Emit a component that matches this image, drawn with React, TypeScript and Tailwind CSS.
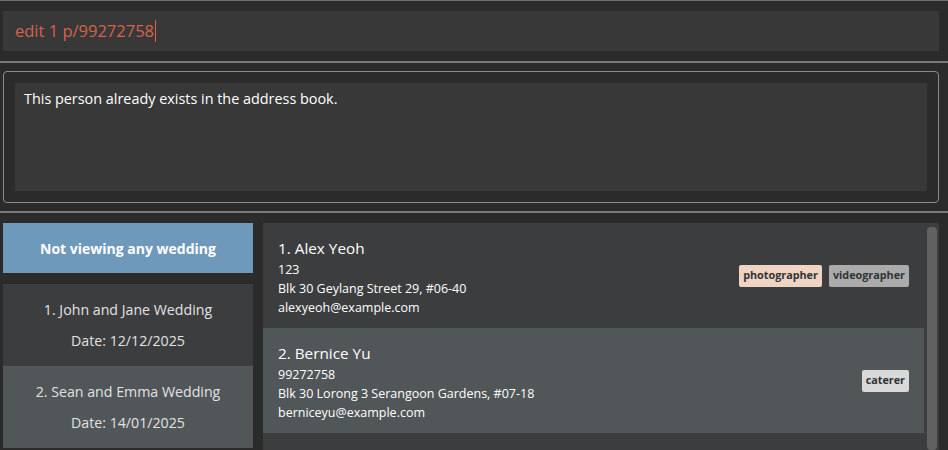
const persons = [
  {
    name: "1. Alex Yeoh",
    phone: "123",
    address: "Blk 30 Geylang Street 29, #06-40",
    email: "alexyeoh@example.com",
    tags: [
      { label: "photographer", color: "bg-[#efd3c3]" },
      { label: "videographer", color: "bg-[#ababab]" },
    ],
  },
  {
    name: "2. Bernice Yu",
    phone: "99272758",
    address: "Blk 30 Lorong 3 Serangoon Gardens, #07-18",
    email: "berniceyu@example.com",
    tags: [{ label: "caterer", color: "bg-[#d9d9d9]" }],
  },
];

const weddings = [
  { title: "1. John and Jane Wedding", date: "Date: 12/12/2025" },
  { title: "2. Sean and Emma Wedding", date: "Date: 14/01/2025" },
];

function Separator() {
  return <div className="h-[2px] w-full bg-[#7a7a7a]" />;
}

export default function App() {
  return (
    <div
      className="w-[948px] h-[450px] overflow-hidden bg-[#2b2b2b] border-t border-[#6f6f6f] flex flex-col"
      style={{ fontFamily: '"Open Sans", "Noto Sans", sans-serif' }}
    >
      {/* Command box */}
      <div className="pt-[10px] pb-[10px] pl-[3px] pr-[9px]">
        <div className="h-[40px] bg-[#383838] flex items-center pl-[12px]">
          <span className="text-[16.5px] text-[#d6624d] leading-none">edit 1 p/99272758</span>
          <span className="w-[1px] h-[22px] bg-[#d6624d] ml-[1px]" />
        </div>
      </div>

      <Separator />

      {/* Result display */}
      <div className="pt-[8px] pb-[8px] pl-[3px] pr-[9px]">
        <div className="h-[132px] border border-[#8c8c8c] rounded-[4px] p-[11px]">
          <div className="h-full bg-[#383838] px-[9px] pt-[6px]">
            <p className="text-[14.4px] text-white leading-[20px]">
              This person already exists in the address book.
            </p>
          </div>
        </div>
      </div>

      <Separator />

      {/* Lists */}
      <div className="flex flex-1 pt-[10px] pl-[3px] pr-[9px] gap-[10px] min-h-0">
        <div className="w-[250px] flex flex-col gap-[11px]">
          <div className="h-[50px] bg-[#6f99bb] flex items-center justify-center">
            <span className="text-[14px] font-bold text-white">Not viewing any wedding</span>
          </div>
          <div className="flex flex-col">
            {weddings.map((w, i) => (
              <div
                key={w.title}
                className={`h-[82px] flex flex-col items-center justify-center gap-[11px] text-[14.2px] leading-[20px] text-[#e2e2e2] ${
                  i % 2 === 0 ? "bg-[#3c3d3f]" : "bg-[#515658]"
                }`}
              >
                <span>{w.title}</span>
                <span>{w.date}</span>
              </div>
            ))}
          </div>
        </div>

        <div className="flex-1 bg-[#3c3d3f] flex">
          <div className="flex-1 flex flex-col">
            {persons.map((p, i) => (
              <div
                key={p.name}
                className={`h-[105px] flex items-center justify-between pl-[15px] pr-[15px] ${
                  i % 2 === 0 ? "bg-[#3c3d3f]" : "bg-[#515658]"
                }`}
              >
                <div className="self-start pt-[13px] flex flex-col text-white">
                  <span className="text-[15.3px] leading-[24px]">{p.name}</span>
                  <span className="text-[12.5px] leading-[19px]">{p.phone}</span>
                  <span className="text-[12.5px] leading-[19px]">{p.address}</span>
                  <span className="text-[12.5px] leading-[19px]">{p.email}</span>
                </div>
                <div className="flex gap-[7px]">
                  {p.tags.map((t) => (
                    <span
                      key={t.label}
                      className={`${t.color} h-[22px] px-[4px] rounded-[2px] flex items-center text-[10.8px] font-bold text-[#2f3337]`}
                    >
                      {t.label}
                    </span>
                  ))}
                </div>
              </div>
            ))}
          </div>
          <div className="w-[15px] pl-[3px] pr-[2px] pt-[4px]">
            <div className="h-full bg-[#616161] rounded-[4px]" />
          </div>
        </div>
      </div>
    </div>
  );
}
